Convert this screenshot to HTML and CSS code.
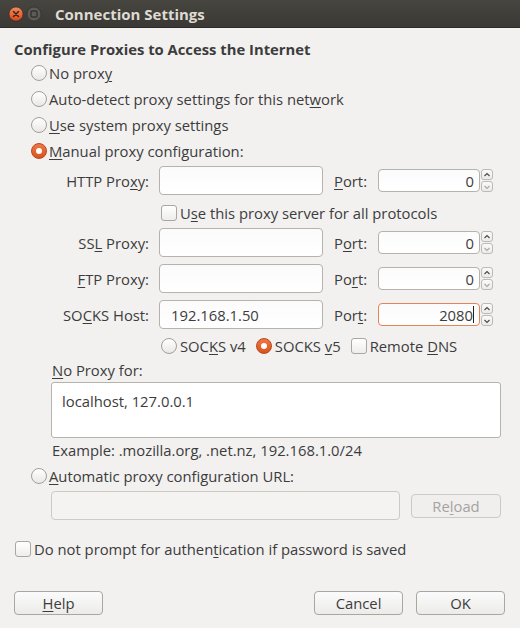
FILE: index.html
```html
<!DOCTYPE html>
<html lang="en">
  <head>
    <meta charset="UTF-8" />
    <title>Connection Settings</title>
    <link rel="stylesheet" href="styles.css">
  </head>
  <body>
    <div class="titlebar">
      <svg class="wbtn" width="16" height="16" viewBox="0 0 16 16">
        <defs>
          <linearGradient id="cg" x1="0" y1="0" x2="0" y2="1">
            <stop offset="0" stop-color="#f58a5a" />
            <stop offset="1" stop-color="#dd4814" />
          </linearGradient>
        </defs>
        <circle cx="8" cy="8" r="7" fill="url(#cg)" stroke="#2a2926" stroke-width="0.6" />
        <path d="M5.5 5.5 L10.5 10.5 M10.5 5.5 L5.5 10.5" stroke="#3a2a22" stroke-width="1.6" stroke-linecap="round" />
      </svg>
      <svg class="wbtn" width="16" height="16" viewBox="0 0 16 16">
        <circle cx="8" cy="8" r="7" fill="#5d5c58" stroke="#2a2926" stroke-width="0.6" />
        <rect x="5" y="5" width="6" height="6" rx="1" fill="none" stroke="#34332f" stroke-width="1.4" />
      </svg>
      <span class="title">Connection Settings</span>
    </div>

    <div class="dialog">
      <div class="heading">Configure Proxies to Access the Internet</div>

      <div class="radio-row"><span class="radio"></span>No prox<u>y</u></div>
      <div class="radio-row"><span class="radio"></span>Auto-detect proxy settings for this net<u>w</u>ork</div>
      <div class="radio-row"><span class="radio"></span><u>U</u>se system proxy settings</div>
      <div class="radio-row"><span class="radio on"></span><u>M</u>anual proxy configuration:</div>

      <div class="proxies">
        <div class="proxy-row">
          <span class="proxy-label">HTTP Pro<u>x</u>y:</span>
          <span class="field host"></span>
          <span class="port-label"><u>P</u>ort:</span>
          <span class="field port">0</span>
          <span class="spin"><span class="step"><svg viewBox="0 0 10 10"><path d="M2.5 6 L5 3.5 L7.5 6" /></svg></span><span class="step off"><svg viewBox="0 0 10 10"><path d="M2.5 4 L5 6.5 L7.5 4" /></svg></span></span>
        </div>
        <div class="check-row all"><span class="check"></span>U<u>s</u>e this proxy server for all protocols</div>
        <div class="proxy-row">
          <span class="proxy-label">SS<u>L</u> Proxy:</span>
          <span class="field host"></span>
          <span class="port-label">P<u>o</u>rt:</span>
          <span class="field port">0</span>
          <span class="spin"><span class="step"><svg viewBox="0 0 10 10"><path d="M2.5 6 L5 3.5 L7.5 6" /></svg></span><span class="step off"><svg viewBox="0 0 10 10"><path d="M2.5 4 L5 6.5 L7.5 4" /></svg></span></span>
        </div>
        <div class="proxy-row">
          <span class="proxy-label"><u>F</u>TP Proxy:</span>
          <span class="field host"></span>
          <span class="port-label">Po<u>r</u>t:</span>
          <span class="field port">0</span>
          <span class="spin"><span class="step"><svg viewBox="0 0 10 10"><path d="M2.5 6 L5 3.5 L7.5 6" /></svg></span><span class="step off"><svg viewBox="0 0 10 10"><path d="M2.5 4 L5 6.5 L7.5 4" /></svg></span></span>
        </div>
        <div class="proxy-row">
          <span class="proxy-label">SO<u>C</u>KS Host:</span>
          <span class="field host">192.168.1.50</span>
          <span class="port-label">Por<u>t</u>:</span>
          <span class="field port focus">2080<span class="caret"></span></span>
          <span class="spin"><span class="step"><svg viewBox="0 0 10 10"><path d="M2.5 6 L5 3.5 L7.5 6" /></svg></span><span class="step"><svg viewBox="0 0 10 10"><path d="M2.5 4 L5 6.5 L7.5 4" /></svg></span></span>
        </div>
        <div class="socks-row">
          <span class="radio"></span><span class="opt">SOC<u>K</u>S v4</span>
          <span class="radio on"></span><span class="opt">SOCKS <u>v</u>5</span>
          <span class="check"></span><span class="opt">Remote <u>D</u>NS</span>
        </div>
      </div>

      <div class="indent">
        <div class="noproxy-label"><u>N</u>o Proxy for:</div>
        <div class="textarea">localhost, 127.0.0.1</div>
        <div class="hint">Example: .mozilla.org, .net.nz, 192.168.1.0/24</div>
      </div>

      <div class="radio-row"><span class="radio"></span><u>A</u>utomatic proxy configuration URL:</div>
      <div class="url-row">
        <span class="field url disabled"></span>
        <span class="button reload">Re<u>l</u>oad</span>
      </div>

      <div class="check-row auth"><span class="check"></span>Do not prompt for authen<u>t</u>ication if password is saved</div>

      <div class="actions">
        <span class="button"><u>H</u>elp</span>
        <span class="spacer"></span>
        <span class="button">Cancel</span>
        <span class="button">OK</span>
      </div>
    </div>
  </body>
</html>
```

FILE: styles.css
```css
* {
  margin: 0;
  padding: 0;
  box-sizing: border-box;
}
body {
  width: 520px;
  height: 628px;
  background-color: #f2f1f0;
  font-family: "Open Sans", "Noto Sans", sans-serif;
  font-size: 14.8px;
  color: #3c3c3c;
  overflow: hidden;
}
u {
  text-decoration-thickness: 1px;
  text-underline-offset: 2px;
}

/* title bar */
.titlebar {
  height: 28px;
  display: flex;
  align-items: center;
  padding-left: 8px;
  background: linear-gradient(#46453f, #3a3935);
  border-bottom: 1px solid #2c2b28;
}
.wbtn {
  width: 16px;
  height: 16px;
  margin-right: 2px;
}
.title {
  margin-left: 11px;
  font-weight: bold;
  font-size: 15px;
  color: #dfdbd2;
}

/* dialog body */
.dialog {
  padding: 0 15px 0 14px;
}
.heading {
  margin-top: 11px;
  height: 20px;
  line-height: 20px;
  font-weight: bold;
}
.radio-row {
  height: 26px;
  display: flex;
  align-items: center;
  padding-left: 17px;
}
.heading + .radio-row {
  margin-top: 1px;
}
.radio {
  width: 16px;
  height: 16px;
  border-radius: 50%;
  border: 1px solid #a39f99;
  background: linear-gradient(#ffffff, #eae8e5);
  margin-right: 2px;
  flex-shrink: 0;
  display: flex;
  align-items: center;
  justify-content: center;
}
.radio.on {
  border-color: #b8481c;
  background: linear-gradient(#f07746, #d9531e);
}
.radio.on::after {
  content: "";
  width: 6px;
  height: 6px;
  border-radius: 50%;
  background-color: #ffffff;
}
.check {
  width: 16px;
  height: 16px;
  border-radius: 3px;
  border: 1px solid #aaa6a0;
  background: linear-gradient(#ffffff, #eeedeb);
  margin-right: 3px;
  flex-shrink: 0;
}

/* proxy rows */
.proxies {
  margin-top: 2px;
}
.proxy-row {
  height: 29px;
  display: flex;
  align-items: center;
}
.proxy-row + .proxy-row {
  margin-top: 7px;
}
.proxy-label {
  width: 135px;
  margin-right: 10px;
  text-align: right;
}
.field {
  height: 29px;
  border: 1px solid #b6b2ac;
  border-radius: 4px;
  background: linear-gradient(#fbfbfb, #ffffff);
  display: flex;
  align-items: center;
  padding: 0 11px;
  color: #3c3c3c;
}
.field.host {
  width: 164px;
}
.port-label {
  width: 44px;
  margin-left: 11px;
}
.field.port {
  width: 102px;
  height: 23px;
  justify-content: flex-end;
  padding: 0 5px;
}
.field.focus {
  border-color: #e5845c;
  padding-right: 5px;
}
.caret {
  width: 1px;
  height: 17px;
  background-color: #222222;
}
.spin {
  width: 12px;
  height: 23px;
  margin-left: 1px;
  display: flex;
  flex-direction: column;
}
.step {
  height: 11px;
  border: 1px solid #bdb9b3;
  border-radius: 3px;
  background: linear-gradient(#fafafa, #ecebe9);
  display: flex;
  align-items: center;
  justify-content: center;
}
.step + .step {
  margin-top: 1px;
}
.step svg {
  width: 10px;
  height: 10px;
  fill: none;
  stroke: #4c4c4c;
  stroke-width: 1.2;
}
.step.off svg {
  stroke: #aaaaaa;
}
.check-row {
  display: flex;
  align-items: center;
}
.check-row.all {
  height: 33px;
  padding-top: 3px;
  padding-left: 147px;
}
.socks-row {
  height: 33px;
  display: flex;
  align-items: center;
  padding-left: 147px;
}
.socks-row .radio {
  margin-right: 3px;
}
.opt {
  margin-right: 10px;
}

/* no proxy */
.indent {
  padding-left: 37px;
}
.noproxy-label {
  height: 17px;
  line-height: 17px;
  padding-left: 1px;
}
.textarea {
  margin-top: 3px;
  width: 450px;
  height: 56px;
  border: 1px solid #b6b2ac;
  border-radius: 3px;
  background-color: #ffffff;
  padding: 8px 10px;
  line-height: 20px;
}
.hint {
  height: 25px;
  line-height: 25px;
  padding-left: 1px;
}
.url-row {
  display: flex;
  align-items: center;
  padding-left: 37px;
  margin-top: 2px;
}
.field.url {
  width: 349px;
  height: 29px;
}
.field.disabled {
  background: #f4f3f2;
  border-color: #cdc9c3;
}
.button {
  width: 89px;
  height: 24px;
  border: 1px solid #aaa6a0;
  border-radius: 4px;
  background: linear-gradient(#fbfbfb, #ecebe9);
  display: flex;
  align-items: center;
  justify-content: center;
}
.button.reload {
  width: 90px;
  margin-left: 11px;
  color: #a5a39f;
  border-color: #cdc9c3;
  background: #f0efee;
}
.check-row.auth {
  margin-top: 16px;
  height: 26px;
  padding-left: 1px;
}
.actions {
  margin-top: 29px;
  display: flex;
}
.spacer {
  flex: 1;
}
.actions .button + .button {
  margin-left: 13px;
}
```
